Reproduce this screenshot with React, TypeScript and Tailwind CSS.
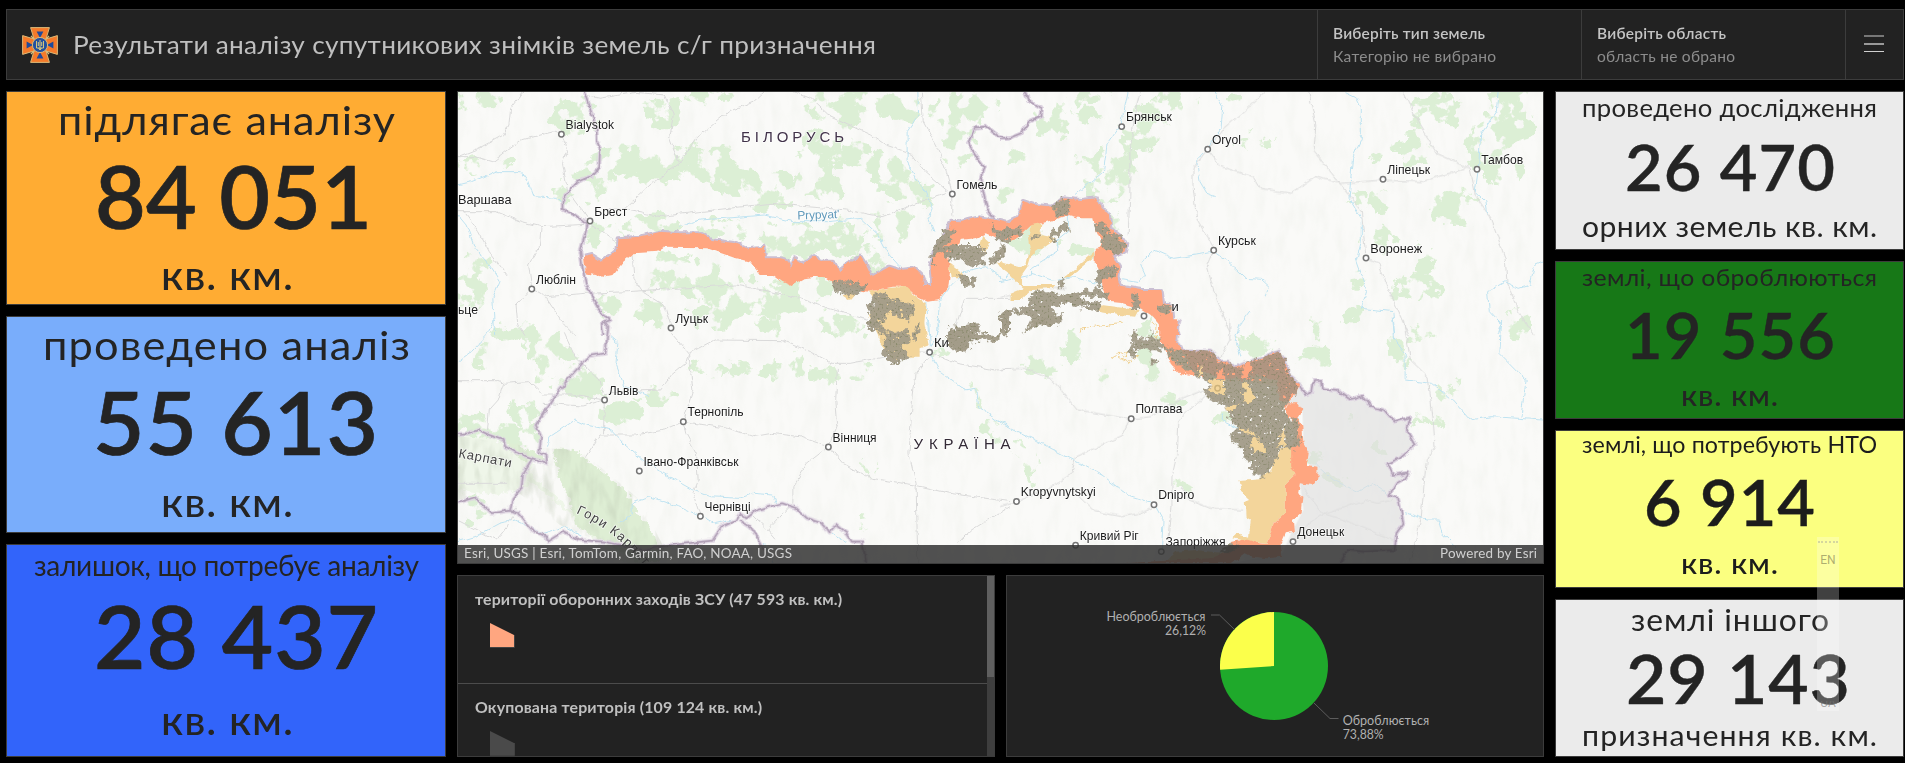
import { useLayoutEffect, useRef } from "react";

/* One line of text, widened or narrowed to fill a given width: part tracking, part stretch. */
function Fit({ text, w, className = "" }: { text: string; w: number; className?: string }) {
  const ref = useRef<HTMLSpanElement>(null);
  useLayoutEffect(() => {
    const el = ref.current;
    if (!el) return;
    el.style.transform = "none";
    el.style.letterSpacing = "0px";
    const natural = el.getBoundingClientRect().width;
    const gap = ((w - natural) / (text.length - 1)) * 0.45;
    el.style.letterSpacing = `${gap}px`;
    const spaced = natural + gap * (text.length - 1);
    el.style.transform = `scaleX(${w / spaced})`;
    if (el.parentElement) el.parentElement.style.width = `${w}px`;
  }, [text, w]);
  return (
    <span className={`block whitespace-pre ${className}`}>
      <span ref={ref} className="block w-max origin-left">
        {text}
      </span>
    </span>
  );
}

type Line = { text: string; w: number; cls: string };
type Stat = { box: string; lines: Line[] };

const LEFT: Stat[] = [
  {
    box: "h-[214px] bg-[#ffac33]",
    lines: [
      { text: "підлягає аналізу", w: 337, cls: "mt-[5.6px] text-[41px]" },
      { text: "84 051", w: 277, cls: "mt-[12.2px] pl-[14px] text-[87px] font-semibold [-webkit-text-stroke:.7px_#242424]" },
      { text: "кв. км.", w: 132, cls: "mt-[16.7px] pl-[2px] text-[40px] font-medium" },
    ],
  },
  {
    box: "h-[217px] bg-[#79adfb]",
    lines: [
      { text: "проведено аналіз", w: 367, cls: "mt-[5.6px] text-[41px]" },
      { text: "55 613", w: 285, cls: "mt-[13.2px] pl-[19px] text-[87px] font-semibold [-webkit-text-stroke:.7px_#242424]" },
      { text: "кв. км.", w: 132, cls: "mt-[17.2px] pl-[2px] text-[40px] font-medium" },
    ],
  },
  {
    box: "h-[213px] bg-[#3264fa]",
    lines: [
      { text: "залишок, що потребує аналізу", w: 385, cls: "mt-[3.8px] mb-[1.2px] text-[29px]" },
      { text: "28 437", w: 284, cls: "mt-[12.2px] pl-[19px] text-[87px] font-semibold [-webkit-text-stroke:.7px_#242424]" },
      { text: "кв. км.", w: 132, cls: "mt-[21px] pl-[2px] text-[40px] font-medium" },
    ],
  },
];

const RIGHT: Stat[] = [
  {
    box: "h-[159px] bg-[#ebebeb]",
    lines: [
      { text: "проведено дослідження", w: 295, cls: "mt-[1.8px] text-[25px]" },
      { text: "26 470", w: 210, cls: "mt-[15.3px] text-[63px] font-semibold [-webkit-text-stroke:.4px_#242424]" },
      { text: "орних земель кв. км.", w: 295, cls: "mt-[13.2px] text-[29px]" },
    ],
  },
  {
    box: "h-[158px] bg-[#177817]",
    lines: [
      { text: "землі, що оброблюються", w: 295, cls: "mt-[2.3px] mb-[.7px] text-[24px]" },
      { text: "19 556", w: 210, cls: "mt-[13.1px] text-[63px] font-semibold [-webkit-text-stroke:.4px_#242424]" },
      { text: "кв. км.", w: 97, cls: "mt-[14.2px] text-[29px] font-medium" },
    ],
  },
  {
    box: "h-[158px] bg-[#fbff80]",
    lines: [
      { text: "землі, що потребують НТО", w: 295, cls: "mt-[1.2px] mb-[.8px] text-[23px] text-[#1c1c1c]" },
      { text: "6 914", w: 171, cls: "mt-[13.1px] text-[63px] font-semibold text-[#1c1c1c] [-webkit-text-stroke:.4px_#1c1c1c]" },
      { text: "кв. км.", w: 97, cls: "mt-[15.2px] text-[29px] font-medium text-[#1c1c1c]" },
    ],
  },
  {
    box: "h-[158px] bg-[#ebebeb]",
    lines: [
      { text: "землі іншого", w: 198, cls: "mt-[3.4px] mb-px text-[30px]" },
      { text: "29 143", w: 224, cls: "mt-[8.3px] pl-4 text-[68px] font-semibold [-webkit-text-stroke:.4px_#242424]" },
      { text: "призначення кв. км.", w: 295, cls: "mt-[9.5px] text-[28px]" },
    ],
  },
];

function StatCard({ stat }: { stat: Stat }) {
  return (
    <section className={`flex flex-col items-center overflow-hidden border border-[#3c3c3c] pt-px text-[#242424] ${stat.box}`}>
      {stat.lines.map((l) => (
        <div key={l.text} className={`shrink-0 leading-none ${l.cls}`}>
          <Fit text={l.text} w={l.w} />
        </div>
      ))}
    </section>
  );
}

function Emblem() {
  return (
    <svg className="h-9 w-9" viewBox="0 0 36 36">
      {[0, 90, 180, 270].map((a) => (
        <g key={a} transform={`rotate(${a} 18 18)`}>
          <path d="M8.6 .6h18.8L24 12l-6 6-6-6Z" fill="#f47a2a" stroke="#d9b978" strokeWidth="1" />
          <path d="M14.6 4.6h6.8L18 11Z" fill="#1d4a9c" />
        </g>
      ))}
      <g stroke="#d9b978" strokeWidth="1.4">
        <path d="m9 9 18 18M27 9 9 27" />
      </g>
      <circle cx="18" cy="18" r="7.6" fill="#23509f" stroke="#d9b978" strokeWidth="1" />
      <path d="M14.5 14v7h7v-7M18 13v10M16.5 21l1.500 2 1.500-2M16.300 15v4M19.700 15v4" fill="none" stroke="#e6d27a" strokeWidth=".9" />
    </svg>
  );
}

function Selector({ title, tw, value, vw }: { title: string; tw: number; value: string; vw: number }) {
  return (
    <div className="w-[264px] border-l border-[#3c3c3c] pt-[14px] pl-[15px] text-[15px]">
      <Fit text={title} w={tw} className="leading-[19px] font-semibold text-[#c4c4c4]" />
      <Fit text={value} w={vw} className="mt-[4px] leading-[19px] text-[#8c8c8c]" />
    </div>
  );
}

/* The map is drawn in four quadrants, each with its own local grid. */
const NW = "translate(450 85) scale(.35714 .33333)";
const SW = "translate(450 320) scale(.35714 .33333)";
const NE = "translate(1000 85) scale(.35077 .33333)";
const SE = "translate(1000 320) scale(.35077 .33333)";

type Quad = { t: string; d: string[] };

const FOREST: { t: string; e: number[][] }[] = [
  { t: NW, e: [[90,40,60,26],[350,95,55,50],[600,75,50,40],[720,35,60,20],[1110,70,90,50],[1210,50,50,40],[1280,75,40,35],[400,290,60,45],[480,225,80,35],[580,255,80,35],[720,215,70,30],[740,250,60,35],[800,290,60,40],[890,320,70,50],[1040,190,50,60],[1150,210,50,35],[1030,290,60,45],[1230,260,60,45],[1290,320,60,30],[1430,180,45,50],[1420,90,60,60],[1470,60,60,40],[430,440,50,30],[570,420,60,30],[760,430,60,30],[960,470,90,45],[1100,460,60,45],[1240,410,60,40],[620,560,60,50],[720,590,60,50],[790,640,60,60],[730,690,60,30],[560,680,50,30],[900,650,80,40],[1000,600,70,45],[70,540,30,50],[60,620,40,40],[100,250,60,20],[440,660,30,35],[320,320,20,30],[180,745,40,20],[1090,720,60,30],[1180,530,40,40]] },
  { t: SW, e: [[190,40,60,25],[290,85,60,40],[95,110,25,30],[270,155,30,30],[380,185,50,50],[60,310,50,25],[150,350,90,30],[480,280,60,30],[570,230,50,20],[720,145,45,20],[810,150,35,20],[890,155,50,18],[970,130,22,38],[1050,165,35,25],[1150,150,40,22],[1120,20,50,22],[910,15,50,20],[740,10,60,20],[1170,440,20,25],[1520,330,30,30],[1465,230,15,30],[70,570,30,35],[50,400,40,40],[90,470,25,40],[210,280,45,35],[1380,90,20,20],[1160,610,20,15]] },
  { t: NE, e: [[260,30,60,18],[160,110,50,35],[240,90,45,25],[240,240,40,20],[500,50,60,30],[330,230,50,60],[310,300,60,50],[400,150,60,40],[430,100,40,30],[15,325,30,25],[60,215,20,20],[655,45,20,20],[700,170,25,25],[770,170,20,15],[1170,190,50,40],[1085,205,30,12],[1240,60,60,40],[1230,110,60,30],[1400,190,60,80],[1450,60,50,60],[1460,130,60,60],[1430,260,50,40],[1290,365,70,45],[1080,350,25,35],[1090,450,40,35],[1210,530,25,40],[1190,610,50,40],[1020,580,20,30],[235,500,30,18],[340,420,25,20],[1010,690,25,18],[1480,720,30,40],[1020,330,20,20],[90,470,60,30]] },
  { t: SE, e: [[910,30,25,25],[730,75,40,25],[900,120,35,35],[210,75,25,40],[130,150,40,20],[90,120,15,30],[305,165,22,22],[420,140,30,50],[1200,40,30,25],[1140,95,25,35],[1260,210,35,18],[1210,300,40,14],[1005,305,12,25],[1075,385,14,22],[90,440,18,40],[50,380,25,18],[510,495,30,14],[490,235,25,20],[635,300,25,20],[960,475,30,18],[905,415,20,20],[430,30,40,30]] },
];

const BORDERS: Quad[] = [
  { t: NW, d: ["M375 20 395 80 410 130 412 170 420 190 418 250 400 272 360 290 340 310 315 350 315 372 350 390 375 410 385 420 375 460 365 500 370 540 380 595 400 640 415 670 430 690 450 705 425 715 430 752", "M1568 162 1530 150 1500 125 1470 128 1450 175 1470 210 1495 245 1485 280 1495 330 1505 375 1525 405"] },
  { t: SW, d: ["M430 0 443 20 435 100 390 108 340 165 295 225 240 315 255 350 250 395 270 410 272 430 230 415 190 400 155 380 150 360 110 345 80 330 50 340 22 342", "M230 415 205 460 200 500 175 535 168 572", "M22 548 70 532 95 560 115 580 168 572 190 580 230 630 270 650 275 665 320 635 360 660 430 665 480 675 540 690 620 675 735 662 760 620 800 600 810 580 830 595 860 570 930 550 970 565 1000 595 1040 610 1060 640 1080 615 1110 640 1125 665 1155 665 1165 730", "M810 600 840 620 860 650 880 690"] },
  { t: NE, d: ["M70 20 80 45 120 70 118 95 85 110 60 145 20 162 0 162"] },
  { t: SE, d: ["M855 195 870 225 890 215 895 183 915 183 918 205 960 210 1000 240 1035 230 1060 262 1095 270 1125 305 1170 292 1160 330 1185 375 1140 415 1105 430 1120 465 1165 458 1155 475 1130 490 1110 525 1135 535 1145 580 1150 610 1130 640 1125 690 1040 695 990 690 970 730"] },
];

const EDGE: Quad[] = [
  { t: NW, d: ["M375 515 395 510 425 530 470 490 472 460 530 455 590 440 640 445 700 445 730 465 800 475 830 490 878 485 882 520 925 520 945 525 955 550 965 520 985 535 1005 525 1022 510 1035 530 1075 530 1090 565 1105 540 1150 515 1165 540 1180 575 1205 560 1230 545 1260 555 1300 550 1320 570 1330 600 1350 600 1345 540 1360 490 1395 440 1400 410 1430 412 1450 405 1480 397 1530 405 1568 415"] },
  { t: NE, d: ["M0 415 20 415 50 400 65 348 100 360 150 365 180 340 230 345 275 340 290 370 310 385 315 430 345 455 360 480 355 500 320 510 340 545 335 575 345 605 400 615 460 615 465 655 490 665 495 710 510 750"] },
  { t: SE, d: ["M508 0 500 60 525 95 570 95 600 95 625 125 650 125 670 145 700 130 750 115 795 95 815 130 825 170 855 195"] },
];

const ORANGE: Quad[] = [
  { t: NW, d: [EDGE[0].d[0] + "V465L1530 460 1500 445 1470 460 1430 465 1425 480 1395 510 1400 560 1395 610 1370 645 1340 650 1310 635 1280 605 1240 605 1170 620 1140 615 1100 600 1080 600 1050 580 1020 575 990 580 955 602 930 590 905 570 870 570 840 530 800 520 760 505 720 490 600 488 580 500 515 505 480 535 455 570 430 575 380 565Z"] },
  { t: NE, d: [EDGE[1].d[0] + "H455V720L430 690 400 670 350 655 310 650 290 610 285 560 270 530 270 500 290 475 275 440 265 400 230 400 195 390 150 405 120 415 90 420 60 450 30 465 0 465Z"] },
  { t: SE, d: ["M452-5H508L500 60 525 95 600 95 625 125 650 125 670 145 700 130 750 115 795 95 815 130 825 170 855 195 840 225 820 250 810 265 790 200 700 180 600 175 545 165 510 155 490 135 480 110 455 60Z", "M820 250 850 250 862 270 850 290 862 320 865 370 880 400 875 435 905 440 905 475 890 495 855 490 850 520 865 530 860 580 835 600 838 635 815 640 800 675 805 710 760 715 720 710 700 700 660 730 360 730 420 725 600 715 640 700 660 665 700 658 740 670 760 672 780 610 815 575 815 490 845 460 830 440 830 380 845 330 830 300 820 290 810 270Z"] },
];

const YELLOW: Quad[] = [
  { t: NW, d: ["M1170 620 1230 608 1285 605 1300 630 1335 655 1330 690 1325 756H1200L1170 690 1200 660Z", "M1395 530 1430 560 1440 580 1405 575Z", "M1490 450 1510 470 1500 500 1480 490Z", "M1530 530 1568 545V555L1540 545Z", "M1100 630 1140 620 1120 645Z"] },
  { t: SW, d: ["M1200-5H1325L1340 75 1315 85V110H1280L1240 120 1200 60Z"] },
  { t: NE, d: ["M90 415H118L115 450 160 460 90 510 80 545 60 575V600H160L150 612 90 615 60 645H30V625L65 610 20 560 0 545V530L50 545 75 540 85 490 80 460Z", "M268 500V515L200 575 180 580Z", "M290 660 395 675 385 695 340 690 280 680Z"] },
  { t: SE, d: ["M798 385 832 380V440L845 460 815 490V575L780 610 760 672 700 662 665 655 680 640 710 650 715 600 700 590 698 545 710 540 690 520 683 480 740 475 770 450Z", "M480 715 500 695 560 690 640 700 600 722 480 725Z"] },
];

const YELLOW_TOP: Quad[] = [
  { t: SE, d: ["M598 178 640 180 635 200 645 220 610 225 600 205Z", "M695 185 710 195 725 240 700 245 688 225 698 215Z", "M715 365 730 350 755 380V400L735 395 720 400Z", "M645 265 680 248 675 265 650 275Z", "M800 340 815 330 812 375 795 380Z", "M680 320 725 340 728 348 690 335Z", "M565 145 580 140 575 165 565 170Z"] },
  { t: NW, d: ["M1290 690 1310 700 1300 745 1280 745Z"] },
];

const GRAY: Quad[] = [
  { t: NW, d: ["M1070 590 1100 585 1165 600 1160 615 1130 635 1080 620Z", "M1190 615 1240 640 1290 650 1300 690 1290 710 1250 700 1230 680 1210 720 1230 750 1190 740 1165 720 1175 690 1165 660 1185 640Z", "M1365 490 1420 480 1480 480 1500 500 1490 540 1460 545 1430 520 1400 530Z", "M1420 570 1475 575 1470 605 1440 605Z", "M1510 410 1530 430 1568 440V470L1530 465Z", "M1500 540 1550 480 1560 500 1530 535Z", "M1395 730 1440 720 1480 715 1490 735 1450 752H1395Z", "M1535 690 1568 680V730L1545 710Z", "M1375 450 1400 430 1420 440 1390 480 1350 520 1360 540 1345 540 1350 500Z"] },
  { t: SW, d: ["M1165 0 1200 10 1185 25Z", "M1215 40 1280 30 1290 60 1270 80 1285 110 1240 135 1210 110 1215 85Z", "M1290 10 1312 15 1310 60 1295 60Z", "M1393 25 1450 25 1455 80 1440 95 1400 75Z", "M1450 45 1465 10 1480 15 1475 40 1500 35 1515 52 1545 40 1568 20V35L1540 55 1510 68 1490 50 1475 70 1460 55Z"] },
  { t: NE, d: ["M275 430 300 440 345 455 360 490 330 505 300 495 290 460Z", "M150 355 180 340 200 350 195 390 160 395Z", "M300 545 335 545 330 570 300 585 285 610 275 600V550Z", "M90 620 140 615 180 630 270 610 305 620 310 640 270 635 220 635 250 650 290 655 280 675 230 670 190 655 150 665 155 690 180 685 175 710 140 725 100 720 85 690 50 685 0 700V680L40 670 80 670Z", "M375 625 395 630 400 660 380 675Z", "M450 665 490 655 485 680 455 690Z", "M0 430 40 430 70 430 60 450 20 460 0 450Z", "M185 405 200 440 180 435 150 470 135 465 150 440Z", "M85 450 112 452 105 465 85 463Z", "M0 470 20 505 5 490Z", "M175 575 185 590 175 610 162 610Z", "M60 745 100 715 110 722Z", "M270 410 295 415 310 440 275 440Z", "M0 695 25 700 28 730 0 745Z"] },
  { t: SE, d: ["M460 72 485 85 525 95 600 95 625 125 650 130 670 145 700 150 715 125 760 110 795 95 815 130 825 170 850 195 825 245 810 265 825 300 850 290 855 385 800 385 790 410 770 450 750 475 720 460 712 430 695 415 690 380 665 370 655 340 680 325 650 295 645 260 600 240 580 215 600 190 570 175 540 150 500 130 480 110Z", "M375 40 385 35 395 60 430 50 433 30 440 60 460 55 465 90 430 95 415 85 395 85 385 115 368 100 378 75Z", "M430 115 452 118 450 132 430 130Z", "M60 45 90 0 150-5 120 15 90 15Z", "M0 5 30 0 20 35 0 40Z", "M640 680 680 670 660 700 630 695Z"] },
];

const ORANGE_TOP: Quad[] = [
  { t: SE, d: ["M695 135 718 130 705 180 690 170Z", "M620 155 635 145 640 178 618 175Z", "M490 138 530 155 545 165 510 160Z", "M818 270 830 268 822 300Z"] },
];

const ROADS: Quad[] = [
  { t: NW, d: ["M22 215 70 215 120 230 200 165 290 140 312 148 330 190 315 235 330 320 385 400", "M205 20 170 70 165 120 150 150 80 190 22 215", "M375 30 420 40 520 22 600 30 625 90 615 160 640 235", "M495 375 590 395 700 380 820 365 900 355 1000 365 1110 375 1210 395 1320 350 1395 325", "M425 375 490 370 560 300 640 235 690 160 780 80 850 50 880 20", "M960 20 1010 40 1060 90 1180 150 1220 180 1290 205 1330 260 1395 320", "M1320 20 1325 110 1365 190 1390 260 1405 320 1405 395", "M22 380 130 380 200 410 255 425 380 418", "M255 425 250 490 220 540 229 610 185 660 190 720 210 752", "M229 610 270 635 380 625 500 620 600 612 800 600 900 620 980 640 1060 670 1170 705", "M270 640 320 720 350 752", "M385 410 470 470 510 510 515 580 540 620 600 660 618 725", "M40 380 80 440 110 500 160 570", "M1410 750 1440 640 1568 640"] },
  { t: SW, d: ["M22 182 140 182 150 190 220 185 260 225 340 225 432 240", "M260 250 370 258 432 240 430 340", "M432 225 480 215 590 210 620 165 660 130 668 100 620 40", "M668 100 740 60 930 62 1010 95 1070 130 1120 130 1300 95 1343 97", "M668 100 680 210 653 305 660 340 690 400 695 480 680 520 701 590", "M653 305 780 325 850 350 900 340 980 350 1060 380 1100 430 1180 475 1300 495 1400 520 1568 545", "M653 305 600 330 520 345 420 345 380 410", "M1085 140 1080 240 1085 310 1060 380 1000 430 960 500 960 550 890 630", "M1343 110 1305 160 1295 240 1285 400 1305 490 1310 730", "M1350 100 1420 130 1530 150 1568 148", "M1568 560 1460 630 1420 670", "M22 490 120 490 160 490", "M20 600 130 660 160 620 185 560", "M150 190 135 240 110 270 105 330", "M320 40 350 110 420 180 432 230", "M830 570 890 630 910 655"] },
  { t: NE, d: ["M400 20 385 80 370 200 370 330 365 450", "M592 192 550 250 550 300 560 400 610 490 590 540 610 620 640 700 658 750", "M592 192 630 245 720 275 740 310 830 325 900 275 970 295 1092 285 1200 290 1330 250", "M592 192 640 130 690 85 755 20", "M880 20 900 120 895 200 965 290 1030 380 1043 518", "M1150 20 1195 120 1245 205 1340 250 1355 330 1400 400 1440 520 1445 590 1480 680 1520 750", "M1043 518 1080 535 1110 620 1165 750", "M0 635 100 610 190 610"] },
  { t: SE, d: ["M655 0 655 60 620 125", "M0 148 70 145 150 180 220 270 370 297 430 290 500 245 580 210", "M370 297 345 350 290 375 215 410 205 460 150 500 47 545 0 560", "M620 210 580 230 510 300 505 400 490 470 490 560 480 675", "M215 520 270 575 350 590 400 578 440 560", "M520 500 540 540 600 565 690 570", "M865 505 920 580 980 600 1110 655 1130 670", "M1150 0 1170 120 1220 170 1235 300 1240 380 1215 420 1200 600 1170 720", "M840 640 920 585 1040 540 1080 550 1120 540", "M700 565 760 590 810 600"] },
];

const RIVERS: Quad[] = [
  { t: NW, d: ["M22 300 60 290 130 260 200 260 220 290 235 335 300 340 320 362", "M22 390 45 420 70 490 110 540 140 590 120 640 125 750", "M645 425 700 405 770 400 880 390 960 410 1060 410 1150 400 1200 450 1230 510 1260 545", "M1310 20 1312 90 1280 140 1280 230 1300 270 1330 320 1350 370 1340 400 1355 440", "M1335 650 1340 752", "M1398 610 1370 650 1365 752", "M1568 560 1550 585 1500 545 1440 560 1395 610"] },
  { t: SW, d: ["M22 125 60 95 100 50 125 0", "M448 50 470 70 465 130 490 200 510 205 560 230", "M270 380 280 350 350 300 380 315 450 330 490 375 540 420 590 455 630 480 680 510 730 530 810 535 850 520 905 525 915 550", "M1343 97 1370 155 1440 210 1475 205 1480 260 1530 300 1568 320", "M475 610 510 580 510 550 560 530 640 560 701 590 740 612 790 600", "M22 665 70 650 140 610 180 600 260 640 320 620 370 650", "M1070 640 1110 665", "M1340 0 1345 80", "M1365 0 1370 30 1350 80", "M880 670 905 730"] },
  { t: NE, d: ["M365 20 345 120 305 180 295 260 215 330", "M610 20 635 65 630 130 592 190 560 225 570 290 590 325 615 335", "M985 20 1015 35 1030 70 1030 160 1005 220 995 340 1030 400 1030 470 1015 530 1045 620 1030 670 1120 680 1125 750", "M1420 20 1415 80 1370 150 1365 240 1355 320 1385 350 1390 385", "M609 500 560 510 495 520 440 495 400 535 415 570 395 590 340 580", "M609 500 650 530 700 580 745 583 768 605 755 635", "M715 675 690 710 675 750", "M195 390 195 440 160 470 165 500 90 550 90 570 0 590", "M90 565 150 585 210 575 250 590 290 598", "M1548 530 1525 540 1510 600 1480 610 1440 590 1390 620 1395 680 1430 720 1420 750"] },
  { t: SE, d: ["M0 310 100 360 200 415 290 465 370 530 440 553 465 600 460 690", "M685 5 670 50 690 110", "M1120 0 1125 60 1155 100 1155 180 1230 190 1290 240 1340 300 1400 290 1480 295 1548 300", "M1430 0 1425 100 1500 180 1485 290", "M635 280 630 300 680 325", "M1155 578 1220 600 1250 600 1260 640 1300 680", "M900 430 950 480 1020 515 1060 490 1110 525"] },
];

const CITIES: { n: string; x: number; y: number; w: number }[] = [
  { n: "Bialystok", x: 561.4, y: 134.3, w: 48.5 }, { n: "Брест", x: 590, y: 221, w: 33 },
  { n: "Гомель", x: 952.3, y: 194, w: 41 }, { n: "Люблін", x: 531.8, y: 289, w: 40 },
  { n: "Луцьк", x: 671, y: 328, w: 33 }, { n: "Львів", x: 604.600, y: 400, w: 29.500 },
  { n: "Тернопіль", x: 683.3, y: 421.7, w: 56 }, { n: "Вінниця", x: 828.4, y: 447, w: 44 },
  { n: "Івано-Франківськ", x: 639.3, y: 471, w: 95 }, { n: "Чернівці", x: 700.4, y: 516.3, w: 46 },
  { n: "Брянськ", x: 1121.700, y: 126.600, w: 46 }, { n: "Oryol", x: 1207.700, y: 149.300, w: 29 },
  { n: "Ліпецьк", x: 1383, y: 179.300, w: 43 }, { n: "Тамбов", x: 1477, y: 169.300, w: 42 },
  { n: "Курськ", x: 1213.700, y: 250.300, w: 38 }, { n: "Воронеж", x: 1366, y: 258, w: 52 },
  { n: "Полтава", x: 1131.200, y: 418.700, w: 47 }, { n: "Kropyvnytskyi", x: 1016.500, y: 501.500, w: 75 },
  { n: "Dnipro", x: 1154, y: 504.700, w: 36 }, { n: "Кривий Ріг", x: 1075.600, y: 545.300, w: 59 },
  { n: "Запоріжжя", x: 1161.300, y: 551.600, w: 60 }, { n: "Донецьк", x: 1293, y: 541.600, w: 47 },
];

function Shapes({ quads }: { quads: Quad[] }) {
  return (
    <>
      {quads.map((q, i) => (
        <g key={i} transform={q.t}>
          {q.d.map((d) => (
            <path key={d} d={d} vectorEffect="non-scaling-stroke" />
          ))}
        </g>
      ))}
    </>
  );
}

const REGION = { x: 458, y: 92, width: 1085, height: 471, filterUnits: "userSpaceOnUse", colorInterpolationFilters: "sRGB" } as const;

function MapDrawing() {
  return (
    <svg className="block h-full w-full" viewBox="458 92 1085 471" preserveAspectRatio="none">
      <defs>
        <filter id="forest" {...REGION}>
          <feTurbulence type="fractalNoise" baseFrequency=".06" numOctaves="4" seed="8" result="n" />
          <feDisplacementMap in="SourceGraphic" in2="n" scale="26" xChannelSelector="R" yChannelSelector="G" result="s" />
          <feTurbulence type="fractalNoise" baseFrequency=".05" numOctaves="5" seed="3" />
          <feColorMatrix values="0 0 0 0 0  0 0 0 0 0  0 0 0 0 0  18 0 0 0 -8" result="m" />
          <feComposite in="s" in2="m" operator="in" />
        </filter>
        <filter id="rough" {...REGION}>
          <feTurbulence type="fractalNoise" baseFrequency=".18" numOctaves="3" seed="5" result="n" />
          <feDisplacementMap in="SourceGraphic" in2="n" scale="9" xChannelSelector="R" yChannelSelector="G" />
        </filter>
        <filter id="wobble" {...REGION}>
          <feTurbulence type="fractalNoise" baseFrequency=".12" numOctaves="3" seed="5" result="n" />
          <feDisplacementMap in="SourceGraphic" in2="n" scale="5" xChannelSelector="R" yChannelSelector="G" />
        </filter>
        <filter id="fields" {...REGION}>
          <feTurbulence type="fractalNoise" baseFrequency=".18" numOctaves="3" seed="5" result="n" />
          <feDisplacementMap in="SourceGraphic" in2="n" scale="10" xChannelSelector="R" yChannelSelector="G" result="s" />
          <feTurbulence type="fractalNoise" baseFrequency=".22" numOctaves="3" seed="11" />
          <feColorMatrix values="0 0 0 0 0  0 0 0 0 0  0 0 0 0 0  0 0 0 12 -2.600" result="m" />
          <feComposite in="s" in2="m" operator="in" result="base" />
          <feTurbulence type="fractalNoise" baseFrequency=".5" numOctaves="2" seed="21" />
          <feColorMatrix values="0 0 0 0 .5  0 0 0 0 .51  0 0 0 0 .38  0 4 0 0 -2.300" />
          <feComposite in2="base" operator="in" result="spots" />
          <feMerge>
            <feMergeNode in="base" />
            <feMergeNode in="spots" />
          </feMerge>
        </filter>
        <filter id="relief" {...REGION}>
          <feTurbulence type="fractalNoise" baseFrequency=".09 .03" numOctaves="3" seed="2" />
          <feColorMatrix values="0 0 0 0 .72  0 0 0 0 .76  0 0 0 0 .68  0 1.6 0 0 -.68" />
          <feComposite in2="SourceGraphic" operator="in" />
        </filter>
        <path id="ridge" d="M576 513Q622 534 650 574" />
      </defs>
      <rect x="458" y="92" width="1085" height="471" fill="#fafaf8" />
      <rect x="458" y="92" width="1085" height="471" opacity=".1" filter="url(#relief)" />
      <g filter="url(#forest)" fill="#dcefd5">
        {FOREST.map((f, i) => (
          <g key={i} transform={f.t}>
            {f.e.map(([cx, cy, rx, ry]) => (
              <ellipse key={`${cx}-${cy}`} cx={cx} cy={cy} rx={rx * 1.15} ry={ry * 1.15} />
            ))}
          </g>
        ))}
      </g>
      <g filter="url(#rough)" fill="#deeed4">
        <path d="M458 436 490 438 535 455 528 485 500 495 458 490Z" fill="#eff6e9" />
        <path d="M515 470 560 505 600 545 625 563 655 563 600 540 560 500 525 470Z" fill="#eff6e9" />
        <path d="M552 448 575 450 600 470 625 490 640 515 655 535 660 563 640 563 600 540 575 525 570 500 560 480Z" />
        <path d="M500 438 535 452 548 462 520 460Z" />
      </g>
      <path d="M540 448 580 450 640 500 665 550 650 563 560 525 515 490 458 500V436Z" opacity=".6" filter="url(#relief)" />
      <g fill="none" stroke="#dadada" strokeWidth="1" filter="url(#wobble)">
        <Shapes quads={ROADS} />
      </g>
      <g fill="none" stroke="#bfe3f1" strokeWidth="1" filter="url(#wobble)">
        <Shapes quads={RIVERS} />
      </g>
      <path
        transform={SE}
        d="M855 195 870 225 890 215 895 183 915 183 918 205 960 210 1000 240 1035 230 1060 262 1095 270 1125 305 1170 292 1160 330 1185 375 1140 415 1105 430 1120 465 1165 458 1155 475 1130 490 1110 525 1135 535 1145 580 1150 610 1130 640 1125 690 1040 695 990 690 970 730H660L805 700 830 640 865 570 855 490 905 460 880 430 865 370 862 270 820 250Z"
        fill="#dedede"
        fillOpacity=".62"
      />
      <g fill="none" strokeLinejoin="round" filter="url(#wobble)">
        <g stroke="#ddd3e0" strokeWidth="4"><Shapes quads={BORDERS} /></g>
        <g stroke="#b3a3b8" strokeWidth="1.6"><Shapes quads={BORDERS} /></g>
      </g>
      <g fill="none" strokeLinejoin="round" filter="url(#wobble)" stroke="#cbbfd2" strokeWidth="4">
        <Shapes quads={EDGE} />
      </g>
      <g filter="url(#wobble)">
        <g fill="#f3d59b"><Shapes quads={YELLOW} /></g>
        <g fill="#ffa680"><Shapes quads={ORANGE} /></g>
      </g>
      <path d="M1080 333 1081 328 1095 326 1110 324 1123 322M1112 358 1125 351 1130 353 1118 358 1129 362 1138 355M1150 322 1157 326 1156 345" fill="none" stroke="#f0d090" strokeWidth="1" filter="url(#rough)" />
      <g fill="#a39c89" fillOpacity=".96" filter="url(#fields)"><Shapes quads={GRAY} /></g>
      <g filter="url(#fields)">
        <path transform={SE} d="M520 92 600 95 625 125 650 130 670 145 715 125 795 95 815 130 825 170 850 195 825 245 800 240 790 190 740 165 690 180 600 165 540 140Z" fill="#b3937f" fillOpacity=".8" />
      </g>
      <g fill="#f3d59b" filter="url(#rough)"><Shapes quads={YELLOW_TOP} /></g>
      <g fill="#ffa680" filter="url(#rough)"><Shapes quads={ORANGE_TOP} /></g>
      <g fill="#fff" stroke="#757575" strokeWidth="1.500">
        {CITIES.map((c) => (
          <circle key={c.n} cx={c.x} cy={c.y} r="2.700" />
        ))}
        <circle cx="1144" cy="316" r="2.700" />
        <circle cx="929.600" cy="352.300" r="2.700" />
        <circle cx="1217.600" cy="388.300" r="2.700" fill="none" stroke="#cdb27a" />
      </g>
      <g fontFamily="Liberation Sans, Arial, sans-serif" fontSize="13" fill="#1c1c1c" stroke="#fff" strokeOpacity=".7" strokeWidth="1.600" strokeLinejoin="round" paintOrder="stroke">
        {CITIES.map((c) => (
          <text key={c.n} x={c.x + 4.200} y={c.y - 5.400} textLength={c.w} lengthAdjust="spacingAndGlyphs">
            {c.n}
          </text>
        ))}
        <text x="458" y="203.700" textLength="53.500" lengthAdjust="spacingAndGlyphs">Варшава</text>
        <text x="458" y="314" textLength="20" lengthAdjust="spacingAndGlyphs">ьце</text>
        <text x="934" y="347">Киї</text>
        <text x="1171.500" y="311">и</text>
        <text x="741" y="142.300" fontSize="15" fill="#42334a" textLength="103">БІЛОРУСЬ</text>
        <text x="913.600" y="449.300" fontSize="15" fill="#332a36" textLength="97">УКРАЇНА</text>
        <text x="797.500" y="219.500" fontSize="12" fill="#6099ba" textLength="42" transform="rotate(-2 797 219)">{"Prypyat'"}</text>
        <text x="458" y="457" fill="#444" textLength="54" transform="rotate(11 457 457)">Карпати</text>
        <text fill="#444" letterSpacing="1.300">
          <textPath href="#ridge">Гори Карпати</textPath>
        </text>
      </g>
      <path d="m948 328 24 0-1 22-15 2-8-7z" fill="#a39c89" filter="url(#fields)" />
    </svg>
  );
}

function LegendRow({ title, w, fill, cls }: { title: string; w: number; fill: string; cls: string }) {
  return (
    <div className={`pl-[17px] ${cls}`}>
      <Fit text={title} w={w} className="pt-[14px] text-[15.500px] leading-[19px] font-bold text-[#c0c0c0]" />
      <svg className="mt-[14px] ml-[15px] h-[25px] w-[25px]" viewBox="0 0 25 25">
        <path d="M0 0 24 12V24H0Z" fill={fill} />
        <path d="M0 24.500H24.500V12" fill="none" stroke="#4a4a4a" strokeWidth=".8" />
      </svg>
    </div>
  );
}

function Pie() {
  const share = 0.2612;
  const a = -share * 2 * Math.PI;
  const x = 54 * Math.sin(a);
  const y = -54 * Math.cos(a);
  return (
    <svg className="h-[180px] w-[536px]" viewBox="1007 576 536 180">
      <g transform="translate(1274 666)">
        <circle r="54" fill="#1fa92b" />
        <path d={`M0 0V-54A54 54 0 0 0 ${x} ${y}Z`} fill="#fbff4b" />
      </g>
      <path d="M1211 615h8.500l15 14.500M1314 703l16 15.500h8.500" fill="none" stroke="#5c5c5c" strokeWidth="1" />
      <g fontFamily="Lato, sans-serif" fontSize="12.500" fill="#b0b0b0">
        <text x="1106.500" y="621" textLength="99" lengthAdjust="spacingAndGlyphs">Необроблюється</text>
        <text x="1165" y="635" textLength="41" lengthAdjust="spacingAndGlyphs">26,12%</text>
        <text x="1342.700" y="725.300" textLength="86.500" lengthAdjust="spacingAndGlyphs">Оброблюється</text>
        <text x="1342.700" y="739" textLength="41" lengthAdjust="spacingAndGlyphs">73,88%</text>
      </g>
    </svg>
  );
}

export default function App() {
  return (
    <div className="relative flex h-[763px] w-[1905px] flex-col overflow-hidden bg-black pt-[9px] pl-[6px] font-['Lato',sans-serif]">
      <header className="flex h-[71px] w-[1898px] shrink-0 border border-[#3c3c3c] bg-[#222222]">
        <div className="flex flex-1 items-start pl-[15px]">
          <div className="mt-[17px]"><Emblem /></div>
          <Fit text="Результати аналізу супутникових знімків земель с/г призначення" w={803} className="mt-[17px] ml-[15px] text-[25.500px] leading-[34px] text-[#bfbfbf]" />
        </div>
        <Selector title="Виберіть тип земель" tw={152} value="Категорію не вибрано" vw={163} />
        <Selector title="Виберіть область" tw={129} value="область не обрано" vw={138} />
        <div className="flex w-[58px] flex-col border-l border-[#3c3c3c] pt-[25px] pl-[18px]">
          <i className="h-[2px] w-5 bg-[#777]" />
          <i className="mt-[6px] h-[2px] w-5 bg-[#999]" />
          <i className="mt-[6px] h-px w-5 bg-[#d0d0d0]" />
        </div>
      </header>
      <main className="mt-[11px] flex h-[666px] w-[1898px] gap-[11px]">
        <div className="flex w-[440px] flex-col gap-[11px]">
          {LEFT.map((s) => <StatCard key={s.lines[1].text} stat={s} />)}
        </div>
        <div className="flex w-[1087px] flex-col gap-[11px]">
          <section className="relative h-[473px] border border-[#3c3c3c]">
            <MapDrawing />
            <div className="absolute inset-x-0 bottom-0 flex h-[18px] justify-between bg-[#323232]/85 px-[6px] text-[13px] leading-[17px] text-[#d0d0d0]">
              <Fit text="Esri, USGS | Esri, TomTom, Garmin, FAO, NOAA, USGS" w={328} />
              <Fit text="Powered by Esri" w={97} />
            </div>
          </section>
          <div className="flex h-[182px] gap-[11px]">
            <section className="flex w-[538px] overflow-hidden border border-[#3c3c3c] bg-[#222222]">
              <div className="flex-1">
                <LegendRow title="території оборонних заходів ЗСУ (47 593 кв. км.)" w={367} fill="#ffa680" cls="h-[108px] border-b border-[#4c4c4c]" />
                <LegendRow title="Окупована територія (109 124 кв. км.)" w={287} fill="#4a4a4a" cls="h-[72px]" />
              </div>
              <div className="w-[7px] bg-[#3e3e3e]">
                <div className="h-[101px] bg-[#5f5f5f]" />
              </div>
            </section>
            <section className="w-[538px] border border-[#3c3c3c] bg-[#222222]">
              <Pie />
            </section>
          </div>
        </div>
        <div className="flex w-[349px] flex-col gap-[11px]">
          {RIGHT.map((s) => <StatCard key={s.lines[1].text} stat={s} />)}
        </div>
      </main>
      <div className="absolute top-[537px] left-[1817px] flex h-[174px] w-[22px] flex-col items-center bg-white/25 pt-1 text-[#8a8a5a]/70">
        <i className="w-5 border-t-2 border-dotted border-[#9a9a9a]/40" />
        <span className="mt-[10px] font-['Roboto',sans-serif] text-[12px] leading-[14px]">EN</span>
        <span className="mt-auto mb-[3px] h-[7px] overflow-hidden font-['Roboto',sans-serif] text-[12px] leading-[4px] text-[#777]/60">UA</span>
      </div>
    </div>
  );
}
